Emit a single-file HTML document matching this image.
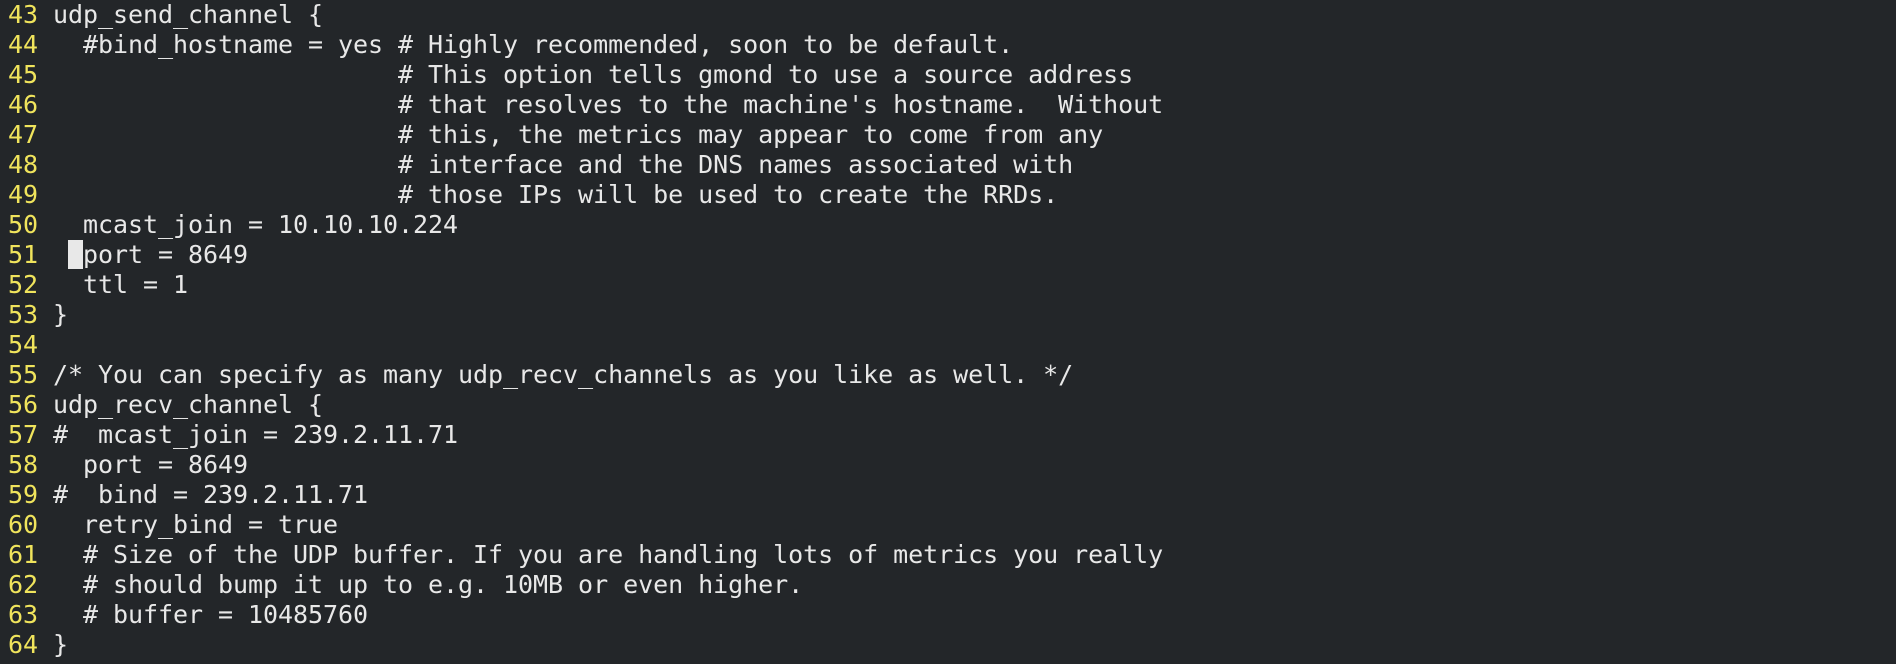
<!DOCTYPE html>
<html><head><style>
html,body{margin:0;padding:0;background:#232629;width:1896px;height:664px;overflow:hidden}
pre{margin:0;padding:0 0 0 8px;font-family:"DejaVu Sans Mono","Liberation Mono",monospace;font-size:25px;letter-spacing:-0.05px;line-height:30px;color:#e8e8e8;white-space:pre}
.n{color:#f0e45c}
.c{background:#e8e8e8;color:#232629}
</style></head><body><pre><span class="n">43</span> udp_send_channel {
<span class="n">44</span>   #bind_hostname = yes # Highly recommended, soon to be default.
<span class="n">45</span>                        # This option tells gmond to use a source address
<span class="n">46</span>                        # that resolves to the machine's hostname.  Without
<span class="n">47</span>                        # this, the metrics may appear to come from any
<span class="n">48</span>                        # interface and the DNS names associated with
<span class="n">49</span>                        # those IPs will be used to create the RRDs.
<span class="n">50</span>   mcast_join = 10.10.10.224
<span class="n">51</span>  <span class="c"> </span>port = 8649
<span class="n">52</span>   ttl = 1
<span class="n">53</span> }
<span class="n">54</span>
<span class="n">55</span> /* You can specify as many udp_recv_channels as you like as well. */
<span class="n">56</span> udp_recv_channel {
<span class="n">57</span> #  mcast_join = 239.2.11.71
<span class="n">58</span>   port = 8649
<span class="n">59</span> #  bind = 239.2.11.71
<span class="n">60</span>   retry_bind = true
<span class="n">61</span>   # Size of the UDP buffer. If you are handling lots of metrics you really
<span class="n">62</span>   # should bump it up to e.g. 10MB or even higher.
<span class="n">63</span>   # buffer = 10485760
<span class="n">64</span> }</pre></body></html>
